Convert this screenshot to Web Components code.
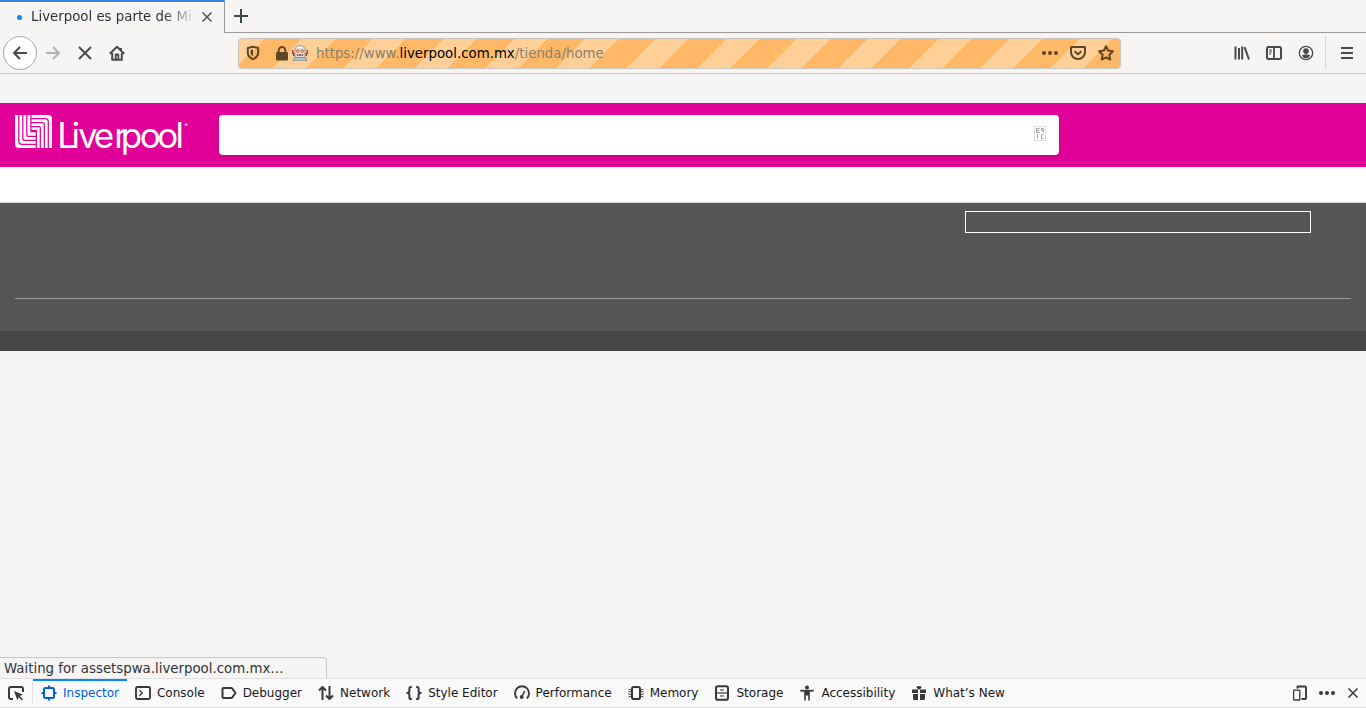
<!DOCTYPE html>
<html lang="en"><head><meta charset="utf-8"><title>Liverpool</title>
<style>html,body{margin:0;height:100%;overflow:hidden;background:#f5f5f5;font-family:"DejaVu Sans",sans-serif}</style>
</head><body><browser-window></browser-window>
<script>
const define=(name,html)=>customElements.define(name,class extends HTMLElement{
  constructor(){super();this.attachShadow({mode:'open'}).innerHTML=html;}
});
const icons={
 back:'<path d="M15 8H2M8 2L2 8l6 6"/>',
 forward:'<path d="M1 8h13M8 2l6 6-6 6"/>',
 close:'<path d="M2 2l12 12M14 2L2 14"/>',
 home:'<path d="M.8 8.7L8 1.8l7.2 6.9M3.2 8v6.8h9.6V8M12 3v3"/><path d="M6.7 14V9.3h2.6V14" stroke-width="1.8"/><path d="M8 9v2" stroke-width="1"/>',
 plus:'<path d="M8 1v14M1 8h14"/>',
 shield:'<path d="M8 1.8L13.2 3v4.7c0 3-2.4 5.2-5.2 6.5-2.8-1.3-5.2-3.5-5.2-6.5V3z"/><path d="M8 4.6v6.6C6.3 10 5.5 9 5.5 7.2V5.1z" fill="currentColor" stroke="none"/>',
 lock:'<rect x="2" y="7" width="12" height="8.5" rx="1.3" fill="currentColor" stroke="none"/><path d="M4.7 8V5.2a3.3 3.3 0 016.6 0V8"/>',
 robot:'<path d="M.7 5v4M15.3 5v4" stroke="#c4202b" stroke-width="1.3"/><path d="M1.8 8v3M14.2 8v3" stroke="#c4202b" stroke-width="1.6"/><path d="M3 5q0-4.3 5-4.3T13 5v7.5H3z" fill="#e2e4e6" stroke="#8a8f94" stroke-width=".9"/><path d="M5.4 2.4h5" stroke="#fff" stroke-width="1.2"/><circle cx="5.8" cy="6" r="1.5" fill="#fff0a0" stroke="#d2702c" stroke-width=".9"/><circle cx="10.2" cy="6" r="1.5" fill="#fff0a0" stroke="#d2702c" stroke-width=".9"/><path d="M5.4 6h.9M9.8 6h.9" stroke="#333" stroke-width=".9"/><path d="M4.8 10h6.4" stroke="#7b302b" stroke-width="1.5"/><path d="M6 10h1m2 0h1" stroke="#fff" stroke-width=".9"/><path d="M2.5 12.8h11l1.5 2.4H1z" fill="#d5dade" stroke="#77818a" stroke-width=".9"/>',
 dots:'<g fill="currentColor" stroke="none"><circle cx="2" cy="8" r="2"/><circle cx="8" cy="8" r="2"/><circle cx="14" cy="8" r="2"/></g>',
 pocket:'<path d="M1.5 2h13q.5 0 .5.6V7c0 4-3 7-7 7S1 11 1 7V2.6q0-.6.5-.6z"/><path d="M4.7 6.2L8 9.4l3.3-3.2"/>',
 star:'<path d="M8 1.2l2.1 4.4 4.8.7-3.5 3.4.8 4.9L8 12.3l-4.2 2.3.8-4.9L1.1 6.3l4.8-.7z"/>',
 library:'<path d="M1.5 1.5v13M5 3v11.5M8.2 1.5v13" /><path d="M10.6 2.2L15 14.5"/>',
 sidebar:'<rect x="1" y="2" width="14" height="12" rx="1.5"/><path d="M8 2v12" stroke-width="1.8"/><path d="M3 5h3M3 7h3M3 9h2" stroke-width="1"/>',
 account:'<circle cx="8" cy="8" r="6.7" stroke-width="1.3"/><circle cx="8" cy="6.1" r="2.8" fill="currentColor" stroke="none"/><path d="M3.8 10.4q1.5-1 2.5-1h3.4q1 0 2.5 1-1.4 2.8-4.2 2.8t-4.2-2.8z" fill="currentColor" stroke="none"/>',
 menu:'<path d="M2 3h12M2 8h12M2 13h12"/>',
 picker:'<path d="M5 14H3q-2 0-2-2V4q0-2 2-2h10q2 0 2 2v3"/><path d="M6 6l9 3.8-3.4 1.2L15 14.2 14 15.4l-3.3-3.1L9.4 15.3z" fill="currentColor" stroke="none"/>',
 inspector:'<rect x="3" y="3" width="10" height="10" rx="1.5"/><path d="M8 .5V3M8 13v2.5M.5 8H3M13 8h2.5"/>',
 console:'<rect x="1" y="2" width="14" height="12" rx="1.4" stroke-width="1.9"/><path d="M4.5 5.2L7.3 8l-2.8 2.8" stroke-width="1.3"/>',
 debugger:'<path d="M2.5 3H10q.8 0 1.3.6L14.5 8l-3.2 4.4q-.5.6-1.3.6H2.5Q1.5 13 1.5 12V4q0-1 1-1z"/>',
 network:'<path d="M4.5 15V2M1 5.5L4.5 2 8 5.5M11.5 1v13M8 10.5l3.5 3.5 3.5-3.5"/>',
 style:'<path d="M5.8 2H5Q3.4 2 3.4 3.6V6Q3.4 8 1.3 8q2.1 0 2.1 2v2.4Q3.4 14 5 14h.8M10.2 2h.8q1.6 0 1.6 1.6V6q0 2 2.1 2-2.1 0-2.1 2v2.4q0 1.6-1.6 1.6h-.8"/>',
 performance:'<path d="M3.2 13.4A7 7 0 1112.8 13.4" stroke-width="1.9"/><path d="M7.7 12L10.7 6" stroke-width="1.5"/><circle cx="7.7" cy="12" r="1.9" fill="currentColor" stroke="none"/>',
 memory:'<rect x="4" y="2" width="8" height="12" rx="1.8"/><path d="M.7 4.2l2.4.8M.3 6.7h2.8M.3 9.2h2.8M.7 12l2.4-.8M15.3 4.2L12.9 5M15.7 6.7h-2.8M15.7 9.2h-2.8M15.3 12l-2.4-.8" stroke-width="1"/>',
 storage:'<rect x="2" y="1.3" width="12" height="13.4" rx="1.8"/><path d="M2 8h12" stroke-width="1.2"/><path d="M6 5h4M6 11h4" stroke-width="1.2"/>',
 accessibility:'<circle cx="8" cy="2.4" r="2" fill="currentColor" stroke="none"/><path d="M1.3 5.7h13.4" stroke-width="1.8"/><path d="M5.2 5h5.6v10.5H9.2V10.5H6.8v5H5.2z" fill="currentColor" stroke="none"/>',
 gift:'<g fill="currentColor" stroke="none"><path d="M1 4.5h6V8H1zM9 4.5h6V8H9zM2 9h5v6H3.2Q2 15 2 13.8zM9 9h5v4.8q0 1.2-1.2 1.2H9z"/></g><path d="M8 4.4L5.7 2.4 7 1l1 1 1-1 1.3 1.4z" fill="currentColor" stroke-width=".7"/>',
 responsive:'<path d="M5.5 3.5V1.5H13q1 0 1 1V13q0 1-1 1H9.5" stroke-width="1.9"/><rect x="1.6" y="5.2" width="6.2" height="9.8" rx=".6" stroke-width="1.3"/>'
};
customElements.define('ui-icon',class extends HTMLElement{
  constructor(){super();this.attachShadow({mode:'open'});}
  connectedCallback(){
    this.shadowRoot.innerHTML=`<style>:host{display:block;flex:none;width:16px;height:16px}svg{display:block;width:100%;height:100%;overflow:visible}</style><svg viewBox="0 0 16 16" fill="none" stroke="currentColor" stroke-width="2" stroke-linecap="butt" stroke-linejoin="round">${icons[this.getAttribute('name')]}</svg>`;
  }
});
define('tab-strip',`<style>
:host{display:flex;height:33px;background:#f6f5f4;color:#2e3436}
.tab{box-sizing:border-box;width:225px;border-top:2px solid #3584e4;border-right:1px solid #9b9a98;display:flex;align-items:center;padding:0 0 2px 17px}
.dot{width:5px;height:5px;border-radius:50%;background:#0a84ff;margin-right:9px;margin-top:1px}
.title{width:162px;font-size:13.33px;line-height:20px;white-space:nowrap;overflow:hidden;-webkit-mask:linear-gradient(90deg,#000 133px,transparent 166px);margin-right:8px}
.x{width:12px;height:12px;margin-top:1px;color:#4a5053}
.rest{box-sizing:border-box;flex:1;border-bottom:1px solid #9b9a98;padding:8px 0 0 8px;color:#3f4649}
</style><div class="tab"><i class="dot"></i><span class="title">Liverpool es parte de Mi</span><ui-icon class="x" name="close"></ui-icon></div><div class="rest"><ui-icon name="plus"></ui-icon></div>`);
define('address-bar',`<style>
:host{box-sizing:border-box;display:flex;align-items:center;width:883px;height:31px;border:1px solid #cdc7c2;border-radius:4px;background:repeating-linear-gradient(135deg,#fed097 0 18px,#ffb866 18px 44.5px,#fed097 44.5px 50px);padding:0 6px;color:#5d4627;box-shadow:0 0 2px #0001}
.sep{width:1px;height:22px;margin:0 6px 0 6px;background:#e6c69a}
.lock{margin-right:2px}
.url{font-size:13.33px;color:#8b7e6c;flex:1;margin-left:8px;white-space:nowrap}.url b{font-weight:400;color:#000}
.end{display:flex;gap:12px}
</style><ui-icon name="shield"></ui-icon><i class="sep"></i><ui-icon class="lock" name="lock"></ui-icon><ui-icon name="robot"></ui-icon><span class="url">https://www.<b>liverpool.com.mx</b>/tienda/home</span><span class="end"><ui-icon name="dots"></ui-icon><ui-icon name="pocket"></ui-icon><ui-icon name="star"></ui-icon></span>`);
define('nav-bar',`<style>
:host{box-sizing:border-box;display:flex;align-items:center;height:41px;background:#f6f5f4;border-bottom:1px solid #cdcac4;padding:0 11px 0 3px;color:#454b4e}
.back{box-sizing:border-box;width:34px;height:34px;border:1px solid #aaa9a8;border-radius:50%;background:#fff;display:grid;place-items:center;margin-right:8px}
.nav{display:flex;gap:16px;margin-right:113px}.off{color:#b4b4b3}
.tools{display:flex;gap:16px;margin-left:auto}.line{width:1px;height:34px;background:#d8d7d5;margin:0 13px 0 11px}
</style><span class="back"><ui-icon name="back"></ui-icon></span><span class="nav"><ui-icon class="off" name="forward"></ui-icon><ui-icon name="close"></ui-icon><ui-icon name="home"></ui-icon></span><address-bar></address-bar><span class="tools"><ui-icon name="library"></ui-icon><ui-icon name="sidebar"></ui-icon><ui-icon name="account"></ui-icon></span><i class="line"></i><ui-icon name="menu"></ui-icon>`);
define('liverpool-logo',`<style>:host{display:block;width:176px;height:44px}svg{display:block;overflow:visible}text{font-family:Inter,sans-serif;font-weight:400;fill:#fff}</style>
<svg width="176" height="44" viewBox="15 113 176 44"><path d="M15 115h33q4 0 4 4v29H19q-4 0-4-4z" fill="#fff"/>
<g fill="none" stroke="#e10098" stroke-width="1.25"><path d="M18.8 115v26.3q0 3 3 3H36M22.8 115v23.3q0 2 2 2H36M26.8 115v20q0 1.3 1.3 1.3H36M30.9 115v16.7H36.3M31 118.7h14.3q3 0 3 3V148M31 122.7h11.3q2 0 2 2V148M31 126.7h8q1.3 0 1.3 1.3v20M31 130.7h5.3V148"/></g>
<text y="147.5" font-size="35" x="57.3 71.5 78 93.7 114.3 120.7 139.7 157.2 175.6">Liverpool</text><text x="184.5" y="127" font-size="5">®</text></svg>`);
define('store-header',`<style>
:host{box-sizing:border-box;display:flex;height:64px;background:#e10098;padding:10px 15px}
.search{box-sizing:border-box;width:840px;height:40px;margin:2px 0 0 28px;background:#fff;border-radius:4px;display:flex;align-items:center;justify-content:flex-end;padding:0 13px 2px 0;box-shadow:0 2px 4px #0002}
svg{display:block}
</style><liverpool-logo></liverpool-logo><div class="search"><svg width="12" height="16" fill="none" stroke="#a5a0a0" stroke-width="1"><rect x=".5" y=".5" width="11" height="14" stroke="#ddd"/><path d="M5.5 2.5h-3v4h3M2.5 4.5h3M9.5 6.5v-4h-2v2h2M3.5 8.5v4M9.5 8.5h-2v4h2"/></svg></div>`);
define('store-footer',`<style>
:host{display:block}.menu{box-sizing:border-box;height:36px;background:#fff;border-bottom:1px solid #d4d4d4}
.main{box-sizing:border-box;height:128px;background:#555;padding:8px 15px 0}
.field{box-sizing:border-box;width:346px;height:22px;border:1px solid #fff;margin:0 40px 65px auto}
.rule{height:1px;background:#999}.base{height:20px;background:#464646}
</style><div class="menu"></div><div class="main"><div class="field"></div><div class="rule"></div></div><div class="base"></div>`);
define('status-bubble',`<style>:host{box-sizing:border-box;display:block;width:327px;height:21px;border:1px solid #c9c5bf;border-width:1px 1px 0 0;border-top-right-radius:4px;background:#f6f5f4;color:#2e3436;font-size:13.33px;line-height:21px;padding-left:4px;white-space:nowrap}</style><slot></slot>`);
define('tool-tab',`<style>
:host{box-sizing:border-box;display:flex;align-items:center;gap:6px;height:28px;padding:0 8px;font-size:12px;color:#18181a;white-space:nowrap}
:host([selected]){color:#0060df;box-shadow:inset 0 2px #0a84ff}
slot[name=icon]{color:#38383d}:host([selected]) slot[name=icon]{color:#0060df}
</style><slot name="icon"></slot><slot></slot>`);
define('dev-toolbar',`<style>
:host{box-sizing:border-box;display:flex;align-items:center;height:30px;background:#f9f9fa;border:solid #e0e0e2;border-width:1px 0;padding:0 5px 0 8px;color:#38383d}
.sep{width:1px;height:20px;background:#e0e0e2;margin-left:8px}.end{display:flex;gap:11px;margin-left:auto;align-items:center}.x{width:12px;height:12px;margin-right:2px;margin-left:1px}
</style><ui-icon name="picker"></ui-icon><i class="sep"></i>${[['inspector','Inspector'],['console','Console'],['debugger','Debugger'],['network','Network'],['style','Style Editor'],['performance','Performance'],['memory','Memory'],['storage','Storage'],['accessibility','Accessibility'],['gift','What’s New']].map(([i,t],n)=>`<tool-tab${n?'':' selected'}><ui-icon slot="icon" name="${i}"></ui-icon>${t}</tool-tab>`).join('')}<span class="end"><ui-icon name="responsive"></ui-icon><ui-icon name="dots"></ui-icon><ui-icon class="x" name="close"></ui-icon></span>`);
define('browser-window',`<style>
:host{display:flex;flex-direction:column;height:708px;background:#f5f5f5}
main{flex:1;display:flex;flex-direction:column;padding-top:29px}status-bubble{margin-top:auto}
</style><tab-strip></tab-strip><nav-bar></nav-bar><main><store-header></store-header><store-footer></store-footer><status-bubble>Waiting for assetspwa.liverpool.com.mx…</status-bubble></main><dev-toolbar></dev-toolbar>`);
</script></body></html>
